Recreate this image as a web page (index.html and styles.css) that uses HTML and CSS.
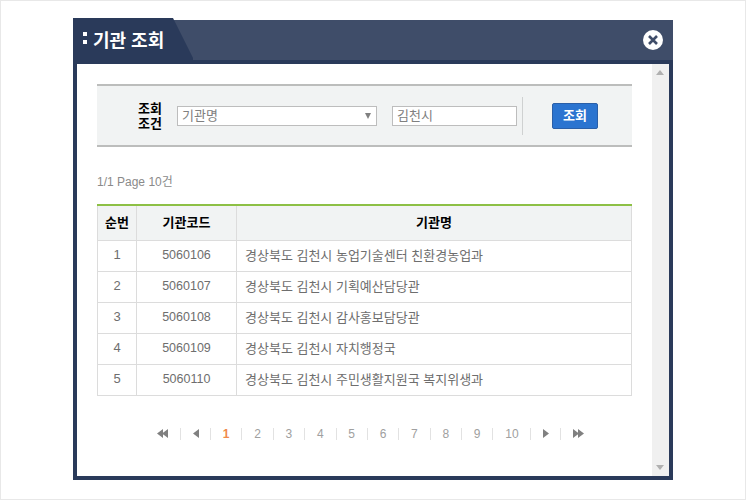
FILE: index.html
```html
<!DOCTYPE html>
<html lang="ko">
<head>
<meta charset="utf-8">
<title>기관 조회</title>
<link rel="stylesheet" href="styles.css">
</head>
<body>
<div class="page">
  <div class="modal">
    <header class="head">
      <h1 class="title"><span class="dots"><i></i><i></i></span><span class="title-text">기관 조회</span></h1>
      <button class="close" type="button" aria-label="닫기">
        <svg width="20" height="20" viewBox="0 0 20 20"><circle cx="10" cy="10" r="10" fill="#fff"/><path d="M6 6l8 8M14 6l-8 8" stroke="#3f4d69" stroke-width="2.600" fill="none"/></svg>
      </button>
    </header>
    <div class="body">
      <main class="content">
        <section class="search">
          <div class="label">조회<br>조건</div>
          <div class="select"><span>기관명</span><b class="arrow"></b></div>
          <div class="input">김천시</div>
          <div class="action"><button class="btn" type="button">조회</button></div>
        </section>
        <p class="count">1/1 Page 10건</p>
        <table class="grid">
          <colgroup><col class="c1"><col class="c2"><col></colgroup>
          <thead><tr><th>순번</th><th>기관코드</th><th>기관명</th></tr></thead>
          <tbody>
            <tr><td>1</td><td class="num">5060106</td><td class="left">경상북도 김천시 농업기술센터 친환경농업과</td></tr>
            <tr><td>2</td><td class="num">5060107</td><td class="left">경상북도 김천시 기획예산담당관</td></tr>
            <tr><td>3</td><td class="num">5060108</td><td class="left">경상북도 김천시 감사홍보담당관</td></tr>
            <tr><td>4</td><td class="num">5060109</td><td class="left">경상북도 김천시 자치행정국</td></tr>
            <tr><td>5</td><td class="num">5060110</td><td class="left">경상북도 김천시 주민생활지원국 복지위생과</td></tr>
          </tbody>
        </table>
        <nav class="pager">
          <a class="nav"><svg width="11" height="9" viewBox="0 0 11 9"><path d="M6 0v9L0 4.500zM11 0v9L5 4.500z" fill="#808080"/></svg></a>
          <a class="nav"><svg width="6" height="9" viewBox="0 0 6 9"><path d="M6 0v9L0 4.500z" fill="#808080"/></svg></a>
          <a class="on">1</a><a>2</a><a>3</a><a>4</a><a>5</a><a>6</a><a>7</a><a>8</a><a>9</a><a>10</a>
          <a class="nav"><svg width="6" height="9" viewBox="0 0 6 9"><path d="M0 0v9l6-4.500z" fill="#808080"/></svg></a>
          <a class="nav"><svg width="11" height="9" viewBox="0 0 11 9"><path d="M0 0v9l6-4.500zM5 0v9l6-4.500z" fill="#808080"/></svg></a>
        </nav>
      </main>
      <aside class="scroll"><b class="up"></b><b class="down"></b></aside>
    </div>
  </div>
</div>
</body>
</html>
```

FILE: styles.css
```css
* { box-sizing: border-box; }
html, body { margin: 0; padding: 0; }
body { font-family: "Liberation Sans", "Noto Sans CJK KR", sans-serif; background: #fff; }
.page {
  width: 746px; height: 500px; padding: 19px 72px;
  border: 1px solid #e8e8e8;
}
.modal { width: 600px; height: 460px; background: #2a3a5a; padding: 0 4px 4px; display: flex; flex-direction: column; }
.head {
  height: 44px; margin: 0 -4px; padding: 0 10px 4px 0;
  display: flex; align-items: center; justify-content: space-between;
  background: linear-gradient(#3f4d69, #3f4d69) left top / 100% 40px no-repeat, #2a3a5a;
}
.title {
  margin: 0; width: 120px; height: 44px; padding: 0 0 4px 10px;
  display: flex; align-items: center; gap: 6px;
  font-size: 18px; font-weight: 700; color: #fff; white-space: nowrap;
  background: #2a3a5a; clip-path: polygon(0 0, 100px 0, 120px 40px, 120px 44px, 0 44px);
}
.title-text { padding-top: 1px; }
.dots { display: flex; flex-direction: column; gap: 4px; }
.dots i { display: block; width: 4px; height: 4px; background: #fff; }
.close { width: 20px; height: 20px; padding: 0; border: 0; background: none; display: block; }
.close svg { display: block; }
.body { flex: 1; display: flex; background: #fff; min-height: 0; }
.content { width: 575px; padding: 20px 20px 0; }
.search {
  height: 63px; display: flex; align-items: center;
  background: #f1f3f3; border-top: 2px solid #bcbdbc; border-bottom: 2px solid #bcbdbc;
}
.label { width: 65px; text-align: right; font-size: 13px; line-height: 15px; font-weight: 700; color: #000; }
.select {
  width: 200px; height: 20px; margin-left: 15px; padding: 0 4px 2px;
  display: flex; align-items: center; justify-content: space-between;
  background: #fff; border: 1px solid #bdbdbd; font-size: 13px; color: #808080;
}
.arrow { width: 0; height: 0; margin: 2px 1px 0 0; border-style: solid; border-width: 6px 3.500px 0; border-color: #808080 transparent transparent; }
.input {
  width: 125px; height: 20px; margin-left: 15px; padding: 0 4px 2px;
  display: flex; align-items: center;
  background: #fff; border: 1px solid #bdbdbd; font-size: 13px; color: #808080;
}
.action { height: 38px; margin-left: 5px; padding-left: 29px; border-left: 1px solid #cfd1d1; display: flex; align-items: center; }
.btn {
  width: 46px; height: 26px; padding: 0 0 2px; border: 1px solid #2a5fa8; border-radius: 2px;
  background: #2b74d0; color: #fff; font: 700 13px "Liberation Sans", "Noto Sans CJK KR", sans-serif;
}
.count { margin: 27px 0 14px; height: 16px; font-size: 12px; line-height: 16px; color: #8a8a8a; }
.grid { width: 535px; border-collapse: collapse; table-layout: fixed; border-top: 2px solid #8dc045; }
.c1 { width: 39px; }
.c2 { width: 100px; }
.grid th, .grid td { border: 1px solid #dcdcdc; padding: 0 0 2px; text-align: center; font-size: 13px; }
.grid th { height: 35px; background: #f1f3f3; color: #000; font-weight: 700; border-top: 0; }
.grid td { height: 31px; color: #6e6e6e; }
.grid td.num { font-size: 12.500px; }
.grid td.left { text-align: left; padding-left: 8px; }
.pager { margin-top: 30px; padding-left: 60px; height: 16px; display: flex; align-items: center; }
.pager a { display: flex; align-items: center; justify-content: center; height: 12px; padding: 0 11.850px; font-size: 12px; color: #a0a0a0; border-left: 1px solid #e2e2e2; }
.pager a.nav { padding: 0 11.500px; }
.pager a.nav:first-child { border-left: 0; padding: 0 12px 0 0; }
.pager a.on { color: #f08a4b; font-weight: 700; }
.scroll { width: 17px; background: #f0f0f0; position: relative; }
.up, .down { position: absolute; left: 4px; width: 0; height: 0; border-style: solid; }
.up { top: 6px; border-width: 0 4px 5px; border-color: transparent transparent #b0b0b0; }
.down { bottom: 6px; border-width: 5px 4px 0; border-color: #b0b0b0 transparent transparent; }
```
